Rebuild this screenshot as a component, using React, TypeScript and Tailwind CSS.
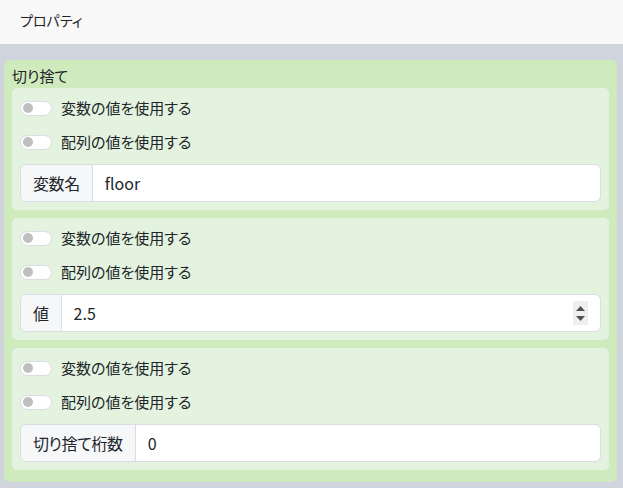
import { useState } from 'react';

type Field = {
  label: string;
  value: string;
  spinner?: boolean;
};

const fields: Field[] = [
  { label: '変数名', value: 'floor' },
  { label: '値', value: '2.5', spinner: true },
  { label: '切り捨て桁数', value: '0' },
];

function Toggle({ label }: { label: string }) {
  const [on, setOn] = useState(false);
  return (
    <label className="flex h-6 items-center cursor-pointer">
      <span
        onClick={() => setOn(!on)}
        className={`flex h-[15px] w-8 items-center rounded-full border ${
          on ? 'border-[#0d6efd] bg-[#0d6efd] justify-end' : 'border-[#dadde1] bg-white justify-start'
        } px-[2px]`}
      >
        <span className={`h-[10px] w-[10px] rounded-full ${on ? 'bg-white' : 'bg-[#bfbfbf]'}`} />
      </span>
      <span className="ml-[9px] text-[15px] text-[#212529]">{label}</span>
    </label>
  );
}

function Spinner() {
  return (
    <div className="absolute right-[12px] top-[6px] flex h-6 w-[15px] flex-col items-center justify-center gap-[5px] bg-[#efefef]">
      <svg width="9" height="5" viewBox="0 0 9 5">
        <path d="M4.5 0 L9 5 L0 5 Z" fill="#505050" />
      </svg>
      <svg width="9" height="5" viewBox="0 0 9 5">
        <path d="M0 0 L9 0 L4.5 5 Z" fill="#505050" />
      </svg>
    </div>
  );
}

function ParamCard({ field }: { field: Field }) {
  return (
    <div className="mb-2 flex flex-col gap-[10px] rounded-[5px] bg-[#e4f3df] px-2 py-2">
      <Toggle label="変数の値を使用する" />
      <Toggle label="配列の値を使用する" />
      <div className="relative flex h-[38px] items-stretch rounded-[6px] border border-[#dadde3] bg-white text-[16px] text-[#212529]">
        <div className="flex items-center rounded-l-[6px] border-r border-[#dadde3] bg-[#f6f7f9] px-3 tracking-[-0.4px]">
          {field.label}
        </div>
        <div className="flex items-center px-3">{field.value}</div>
        {field.spinner && <Spinner />}
      </div>
    </div>
  );
}

export default function App() {
  return (
    <div
      className="flex h-[488px] w-[623px] flex-col overflow-hidden bg-[#d0d4dc] [font-feature-settings:'palt'] text-[#212529]"
      style={{ fontFamily: "'Noto Sans CJK JP', 'Noto Sans', sans-serif" }}
    >
      <header className="flex h-[44px] shrink-0 items-center bg-[#f8f8f8] pb-[3px] pl-5 text-[14px]">
        プロパティ
      </header>
      <main className="flex-1 pb-[6px] pl-1 pr-[6px] pt-4">
        <section className="rounded-[6px] bg-[#cfeabd] px-2 pb-1 pt-1">
          <h2 className="flex h-6 items-center text-[15px]">切り捨て</h2>
          {fields.map((f, i) => (
            <ParamCard key={i} field={f} />
          ))}
        </section>
      </main>
    </div>
  );
}
